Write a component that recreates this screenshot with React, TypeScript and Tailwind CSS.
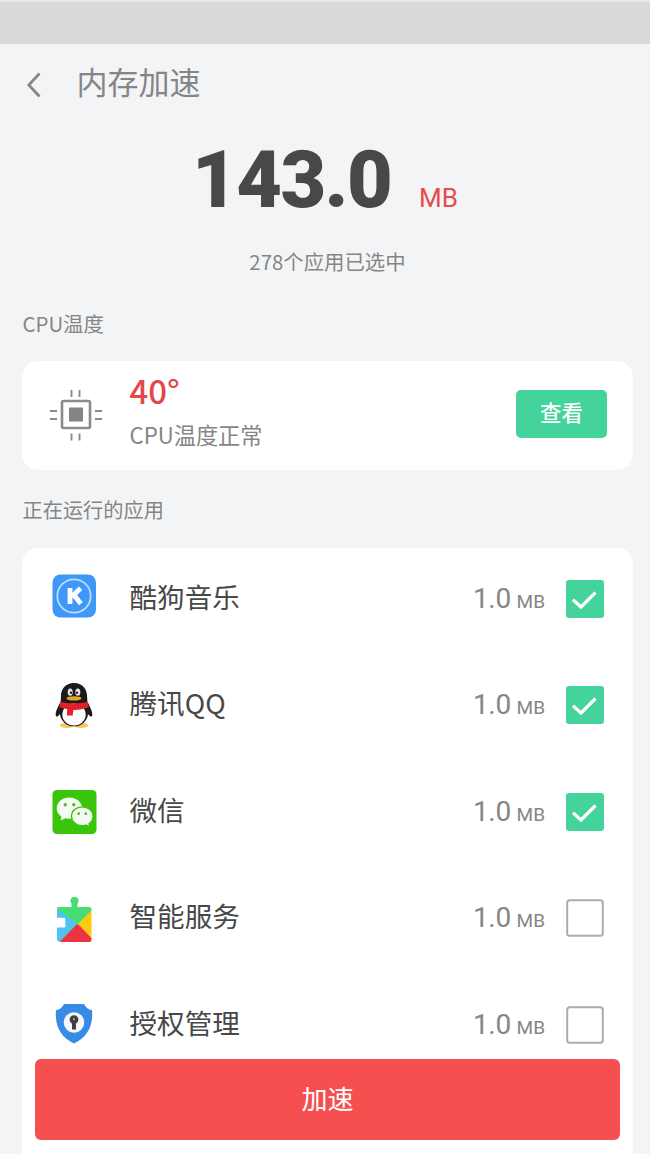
import { useState, type ReactNode } from "react";

const GREEN = "#43d39b";

function KugouIcon() {
  return (
    <svg width="44" height="44" viewBox="0 0 44 44" className="-mt-[5px]">
      <rect width="43.5" height="43" x="0.5" y="0.5" rx="8" fill="#3f98f8" />
      <circle cx="22" cy="22" r="16.7" fill="none" stroke="#b9dcff" strokeWidth="1.8" />
      <path d="M18 14v16M28.6 14.2l-8.900 8.600M21.600 20.600l7.300 9.200" fill="none" stroke="#fff" strokeWidth="4.800" />
    </svg>
  );
}

function QQIcon() {
  return (
    <svg width="44" height="46" viewBox="0 0 44 46">
      <ellipse cx="15" cy="43.4" rx="7" ry="2.6" fill="#f6c75b" />
      <ellipse cx="29" cy="43.4" rx="7" ry="2.6" fill="#f6c75b" />
      <path d="M8.5 20C6 25 3.5 29 3.7 33c.2 2 1.6 2.2 4.2-.8h28.2c2.6 3 4 2.8 4.2.8.2-4-2.3-8-4.8-13z" fill="#1b1b1d" />
      <path d="M22 1C13 1 8.7 7.5 8.900 15l-.4 7h27l-.4-7C35.3 7.5 31 1 22 1z" fill="#1b1b1d" />
      <ellipse cx="22" cy="31" rx="14" ry="13.3" fill="#1b1b1d" />
      <ellipse cx="22" cy="32.5" rx="11.7" ry="11" fill="#fff" />
      <ellipse cx="18.2" cy="10.2" rx="2.5" ry="3.6" fill="#e4e4e4" />
      <ellipse cx="25.8" cy="10.2" rx="2.5" ry="3.6" fill="#e4e4e4" />
      <circle cx="19" cy="10.7" r="1.2" fill="#222" />
      <circle cx="25" cy="10.7" r="1.2" fill="#222" />
      <ellipse cx="22" cy="16.4" rx="7.5" ry="2.2" fill="#e6aa23" />
      <path d="M8.2 19.8c8 2.2 19.6 2.2 27.6 0l1 5.2c-5 2.3-10 3-15.5 2.9l-.6 5.5H15l.2-6.4c-2.6-.4-5.6-1-7.9-2z" fill="#e2202b" />
    </svg>
  );
}

function WeChatIcon() {
  return (
    <svg width="46" height="46" viewBox="0 0 46 46">
      <rect x="1.5" y="1" width="44" height="44" rx="4.5" fill="#3ac50b" />
      <path d="M18.5 8.500C11.500 8.500 5.700 13.100 5.700 19.500c0 3.500 1.900 6.300 4.800 8.200L9.700 31.500l4.600-2.300c1.400.4 2.800.6 4.200.6 7 0 12.800-4.600 12.800-10.300S25.500 8.500 18.500 8.500z" fill="#f4fbf1" />
      <path d="M31.300 17.800c-6 0-10.800 4-10.800 9.400s4.800 9.400 10.800 9.400c1.300 0 2.600-.2 3.700-.6l3.900 2-.9-3.300c2.500-1.700 4.100-4.500 4.100-7.500 0-5.400-4.800-9.400-10.800-9.400z" fill="#f4fbf1" stroke="#3ac50b" strokeWidth="1.3" />
      <circle cx="14.3" cy="15.8" r="1.7" fill="#5bb53d" />
      <circle cx="22.8" cy="15.8" r="1.7" fill="#5bb53d" />
      <circle cx="27.7" cy="24.7" r="1.4" fill="#5bb53d" />
      <circle cx="34.8" cy="24.7" r="1.4" fill="#5bb53d" />
    </svg>
  );
}

function PlayServicesIcon() {
  return (
    <svg width="44" height="46" viewBox="0 0 44 46" className="mt-[3px]">
      <path d="M5 11v9.500h7a1.500 1.500 0 0 1 1.500 1.500v7a1.500 1.500 0 0 1-1.500 1.500H5V42a2.500 2.500 0 0 0 3.500 2.500L26 27z" fill="#50c3ee" />
      <path d="m39.500 13-13.500 14 13.500 14z" fill="#fdcb0b" />
      <path d="M8 44.500 25.500 26.500l14 14.500v2c0 1.200-.8 2-2 2h-28c-.6 0-1.100-.1-1.500-.5z" fill="#ee3442" />
      <path d="M5 12c0-1.200.8-2 2-2h12.500V6.400a4 4 0 1 1 6 0V10h12c1.200 0 2 .8 2 2v1.500L26 27z" fill="#48dd73" />
      <path d="M5 11.500v9h7a1.500 1.500 0 0 1 1.500 1.500v6L26 27.500z" fill="#50c3ee" />
    </svg>
  );
}

function ShieldIcon() {
  return (
    <svg width="44" height="44" viewBox="0 0 44 44" className="-mt-[3px]">
      <path d="M12 3h20c1.500 3.500 4.500 5.500 8 6.200C41.500 25 35 36.500 22 42.500 9 36.500 2.500 25 4 9.200c3.500-.7 6.500-2.700 8-6.200z" fill="#378be6" />
      <circle cx="22" cy="21.5" r="10.3" fill="#f6f7f8" />
      <circle cx="22" cy="18.6" r="4.4" fill="#3c3f43" />
      <path d="M20 20h4v8.500h-4z" fill="#3c3f43" />
      <circle cx="22" cy="18.3" r="1" fill="#b8babc" />
    </svg>
  );
}

function CpuIcon() {
  return (
    <svg width="54" height="54" viewBox="0 0 54 54" fill="none" stroke="#8b8b8b">
      <rect x="13" y="13" width="28" height="27" rx="1.5" strokeWidth="2.6" />
      <rect x="20" y="19.5" width="14" height="14" fill="#858585" stroke="none" />
      <path d="M22.5 2v7M30.5 2v7M22.5 45.5v7M30.5 45.5v7M1 23h7M1 31h7M46 23h7M46 31h7" strokeWidth="1.9" />
    </svg>
  );
}

type App = { name: string; size: string; icon: ReactNode; checked: boolean };

const APPS: App[] = [
  { name: "酷狗音乐", size: "1.0", icon: <KugouIcon />, checked: true },
  { name: "腾讯QQ", size: "1.0", icon: <QQIcon />, checked: true },
  { name: "微信", size: "1.0", icon: <WeChatIcon />, checked: true },
  { name: "智能服务", size: "1.0", icon: <PlayServicesIcon />, checked: false },
  { name: "授权管理", size: "1.0", icon: <ShieldIcon />, checked: false },
];

function CheckBox({ checked, onChange }: { checked: boolean; onChange: () => void }) {
  return (
    <button role="checkbox" aria-checked={checked} onClick={onChange} className="shrink-0">
      <svg width="38" height="38" viewBox="0 0 38 38" fill="none">
        {checked ? (
          <>
            <rect width="38" height="38" rx="3" fill={GREEN} />
            <path d="m7 19.8 8 7.2 14.500-14.500" stroke="#fff" strokeWidth="3.2" />
          </>
        ) : (
          <rect x="1.2" y="1.2" width="35.6" height="35.6" rx="2.5" stroke="#acacac" strokeWidth="2" />
        )}
      </svg>
    </button>
  );
}

export default function App() {
  const [checked, setChecked] = useState(APPS.map((app) => app.checked));

  const toggle = (index: number) =>
    setChecked((prev) => prev.map((value, i) => (i === index ? !value : value)));

  return (
    <div className="flex h-[1154px] w-[650px] flex-col overflow-hidden bg-[#f3f4f6] font-['Noto_Sans_CJK_SC',sans-serif] text-[#858585]">
      {/* Status bar */}
      <div className="h-[43.5px] shrink-0 border-t-2 border-[#e6e7e9] bg-[#d9dadc]" />

      {/* Header */}
      <header className="flex h-20 shrink-0 items-center pl-[27px]">
        <svg width="14" height="26" viewBox="0 0 14 26" fill="none" className="mt-[2px]">
          <path d="M12.5 1.5 1.8 13l10.7 11.500" stroke="#858585" strokeWidth="2.7" />
        </svg>
        <h1 className="mb-[6px] ml-[35.5px] text-[31px] leading-none">内存加速</h1>
      </header>

      {/* Summary */}
      <section className="flex h-[185px] shrink-0 flex-col items-center">
        <div className="flex items-baseline pt-[16px] font-[Roboto,sans-serif]">
          <span className="text-[79px] leading-[80px] font-black tracking-[-1.6px] text-[#484848]">143.0</span>
          <span className="ml-[28px] text-[26px] leading-none text-[#e94b4d]">MB</span>
        </div>
        <p className="mt-[31px] ml-[5px] text-[20.4px] leading-[20px]">278个应用已选中</p>
      </section>

      {/* CPU */}
      <h2 className="-mt-[2px] ml-[22.5px] h-[54px] shrink-0 pt-[6px] text-[20.4px] leading-[20px]">CPU温度</h2>
      <section className="mr-[17px] ml-[22px] flex h-[109px] shrink-0 items-center rounded-[16px] bg-white pr-[26px] pl-[27px]">
        <CpuIcon />
        <div className="mb-[12px] ml-[26.5px] flex-1">
          <p className="text-[33px] leading-[34px] font-medium text-[#e2484a]">40°</p>
          <p className="mt-[16px] text-[22.2px] leading-[22px]">CPU温度正常</p>
        </div>
        <button className="mt-[-3px] h-[48px] w-[91px] rounded-[5px] bg-[#43d39b] pb-[4px] text-[21.5px] leading-none font-medium text-white">
          查看
        </button>
      </section>

      {/* Running apps */}
      <h2 className="ml-[22.5px] h-[78px] shrink-0 pt-[30px] text-[20.2px] leading-[20px]">正在运行的应用</h2>
      <section className="mr-[17px] ml-[22px] flex-1 rounded-t-[16px] bg-white">
        <ul className="flex flex-col gap-[68.6px] pt-[32px] pr-[29px] pl-[29px]">
          {APPS.map((app, i) => (
            <li key={app.name} className="flex h-[38px] items-center">
              <span className="flex w-[46px] shrink-0 justify-center">{app.icon}</span>
              <span className="mb-[4px] ml-[32.5px] flex-1 text-[27.6px] leading-none text-[#484848]">{app.name}</span>
              <span className="mr-[21px] font-[Roboto,sans-serif] text-[28px] leading-none tracking-[-0.3px]">
                {app.size} <span className="-ml-[1px] text-[19px] tracking-normal">MB</span>
              </span>
              <CheckBox checked={checked[i]} onChange={() => toggle(i)} />
            </li>
          ))}
        </ul>
      </section>

      {/* Boost button floats over the list */}
      <button className="absolute top-[1059px] left-[35px] h-[81px] w-[585px] rounded-[6px] bg-[#f5504f] pb-[3px] text-[26px] leading-none text-white">
        加速
      </button>
    </div>
  );
}
